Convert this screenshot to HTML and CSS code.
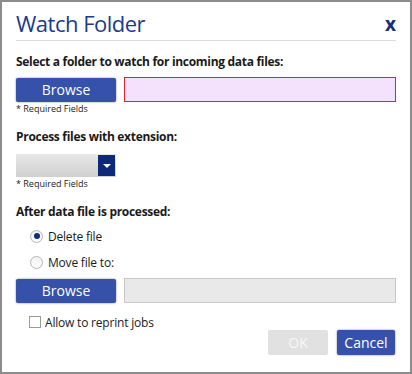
FILE: index.html
```html
<html>
	<head>
<link rel="stylesheet" href="styles.css">
	</head>
	<body>
		<div class="dialog">
			<div class="header">
				<span class="title">Watch Folder</span>
				<span class="close">x</span>
			</div>

			<div class="label first">Select a folder to watch for incoming data files:</div>
			<div class="row">
				<button class="btn primary">Browse</button>
				<div class="field required"></div>
			</div>
			<div class="note">* Required Fields</div>

			<div class="label">Process files with extension:</div>
			<div class="select"><span class="arrow"></span></div>
			<div class="note">* Required Fields</div>

			<div class="label">After data file is processed:</div>
			<div class="option"><span class="radio checked"></span>Delete file</div>
			<div class="option"><span class="radio"></span>Move file to:</div>
			<div class="row second">
				<button class="btn primary">Browse</button>
				<div class="field disabled"></div>
			</div>
			<div class="option check"><span class="box"></span>Allow to reprint jobs</div>

			<div class="footer">
				<button class="btn ok">OK</button>
				<button class="btn primary cancel">Cancel</button>
			</div>
		</div>
	</body>
</html>
```

FILE: styles.css
```css
body {
    margin: 0;
    font-family: "Open Sans", "Noto Sans", sans-serif;
    color: #1a1a1a;
}

.dialog {
    width: 380px;
    height: 370px;
    border: 2px solid #8c8c8c;
    background: #fff;
    padding: 0 14px;
}

.header {
    height: 38px;
    border-bottom: 1px solid #dcdcdc;
    display: flex;
    align-items: center;
    justify-content: space-between;
}

.title {
    font-size: 22px;
    color: #1b3b8b;
    letter-spacing: -0.5px;
    padding-top: 3px;
}

.close {
    font-size: 19px;
    font-weight: bold;
    color: #112f7a;
    padding-top: 5px;
}

.label {
    height: 20px;
    line-height: 22px;
    font-size: 12px;
    font-weight: bold;
    margin-top: 11px;
    letter-spacing: -0.3px;
}

.label.first {
    margin-top: 10px;
}

.row {
    display: flex;
    align-items: center;
    margin-top: 6px;
    height: 25px;
}

.row.second {
    margin-top: 6px;
}

.btn {
    font-family: inherit;
    border: none;
    border-radius: 2px;
    height: 24px;
    font-size: 14px;
    padding: 0;
    color: #fff;
}

.primary {
    width: 100px;
    background: #3551a9;
    box-shadow: 0 0 2px rgba(0, 0, 0, 0.55);
}

.field {
    flex: 1;
    height: 25px;
    margin-left: 8px;
    box-sizing: border-box;
}

.required {
    background: #f4e1fb;
    border: 1px solid #e3212f;
}

.disabled {
    background: #e9e9e9;
    border: 1px solid #c8c8c8;
}

.note {
    font-size: 9px;
    height: 12px;
    line-height: 12px;
    margin-top: 1px;
    color: #222;
}

.select {
    width: 100px;
    height: 23px;
    margin-top: 8px;
    background: linear-gradient(#e8e8e8, #cfcfcf);
    display: flex;
    justify-content: flex-end;
    margin-bottom: 1px;
}

.arrow {
    width: 17px;
    height: 21px;
    margin: 1px 1px 0 0;
    background: #0d2a7a;
    position: relative;
}

.arrow:after {
    content: "";
    position: absolute;
    left: 5px;
    top: 9px;
    border-left: 4px solid transparent;
    border-right: 4px solid transparent;
    border-top: 4px solid #fff;
}

.option {
    display: flex;
    align-items: center;
    height: 20px;
    font-size: 12px;
    letter-spacing: -0.2px;
    margin-top: 6px;
    padding-left: 14px;
}

.label + .option {
    margin-top: 5px;
}

.radio {
    width: 11px;
    height: 11px;
    border: 1px solid #b5b5b5;
    border-radius: 50%;
    background: linear-gradient(#f2f2f2, #fdfdfd);
    margin-right: 5px;
    position: relative;
}

.radio.checked:after {
    content: "";
    position: absolute;
    left: 2.5px;
    top: 2.5px;
    width: 6px;
    height: 6px;
    border-radius: 50%;
    background: #0f2d7e;
}

.check {
    margin-top: 11px;
    height: 16px;
    padding-left: 13px;
}

.box {
    width: 10px;
    height: 10px;
    border: 1px solid #9a9a9a;
    background: #fff;
    margin-right: 4px;
}

.footer {
    display: flex;
    justify-content: flex-end;
    gap: 9px;
    padding-right: 1px;
    height: 25px;
}

.footer .btn {
    height: 25px;
}

.ok {
    width: 60px;
    background: #e1e1e1;
    color: #f8f8f8;
}

.cancel {
    width: 58px;
}
```
